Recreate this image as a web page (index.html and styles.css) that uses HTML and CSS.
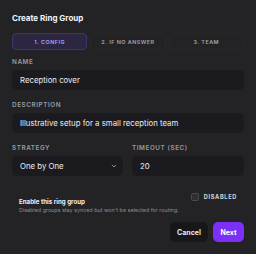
FILE: index.html
```html
<!DOCTYPE html>
<html>
<head>
<meta charset="utf-8">
<link rel="stylesheet" href="styles.css">
</head>
<body>
<div class="modal">
  <h1 class="title">Create Ring Group</h1>
  <div class="tabs">
    <div class="tab active">1. CONFIG</div>
    <div class="tab">2. IF NO ANSWER</div>
    <div class="tab">3. TEAM</div>
  </div>
  <div class="field first">
    <div class="label">NAME</div>
    <div class="input">Reception cover</div>
  </div>
  <div class="field">
    <div class="label">DESCRIPTION</div>
    <div class="input">Illustrative setup for a small reception team</div>
  </div>
  <div class="row">
    <div class="field">
      <div class="label">STRATEGY</div>
      <div class="input select">One by One
        <svg class="chev" width="6" height="4" viewBox="0 0 6 4"><path d="M0.8 0.8 L3 3 L5.2 0.8" fill="none" stroke="#8a8a93" stroke-width="1"/></svg>
      </div>
    </div>
    <div class="field">
      <div class="label">TIMEOUT (SEC)</div>
      <div class="input">20</div>
    </div>
  </div>
  <div class="enable">
    <div class="etext">
      <div class="etitle">Enable this ring group</div>
      <div class="esub">Disabled groups stay synced but won't be selected for routing.</div>
    </div>
    <div class="toggle"><span class="box"></span><span class="tlabel">DISABLED</span></div>
  </div>
  <div class="actions">
    <button class="btn cancel">Cancel</button>
    <button class="btn next">Next</button>
  </div>
</div>
</body>
</html>
```
FILE: styles.css
```css
* { box-sizing: border-box; }
html, body { margin: 0; padding: 0; background: #1b1b1e; }
body { font-family: Inter, "Noto Sans", sans-serif; color: #e8e8ec; }
.modal {
  width: 256px;
  height: 254px;
  background: #232326;
  padding: 12px 12px 12px 12px;
  overflow: hidden;
}
.title { margin: 0; font-size: 8px; font-weight: 700; line-height: 12px; color: #f4f4f6; }
.tabs { display: grid; grid-template-columns: 1fr 1fr 1fr; gap: 3px; margin-top: 9px; }
.tab {
  height: 17px; border: 1px solid #28282c; border-radius: 4px;
  font-size: 5.4px; letter-spacing: 0.5px; font-weight: 600; color: #a4a4ad;
  display: flex; align-items: center; justify-content: center;
}
.tab.active { background: #2c2642; border-color: #3f3568; color: #b6a6ee; }
.field { margin-top: 11px; }
.field.first { margin-top: 8px; }
.row .field { margin-top: 11px; }
.label { font-size: 6.3px; font-weight: 600; letter-spacing: 0.6px; color: #9a9aa2; line-height: 8px; }
.input {
  margin-top: 4px; height: 20px; background: #1b1b1f; border-radius: 5px;
  font-size: 7.8px; color: #ececf0; padding: 0 8px; display: flex; align-items: center;
}
.select { justify-content: space-between; padding-right: 6px; }
.row { display: grid; grid-template-columns: 111px 112px; gap: 9px; }
.enable { display: flex; justify-content: space-between; align-items: flex-start; margin-top: 22px; padding-left: 7px; }
.etitle { font-size: 6.2px; font-weight: 700; color: #f2f2f4; line-height: 8px; }
.esub { font-size: 5.4px; color: #8c8c95; line-height: 7px; margin-top: 1px; white-space: nowrap; }
.toggle { display: flex; align-items: center; gap: 5px; margin-top: -5px; margin-right: 7px; }
.box { width: 8px; height: 8px; border: 1px solid #4a4a50; border-radius: 1.5px; background: #2f2f33; }
.tlabel { font-size: 5.6px; font-weight: 700; letter-spacing: 0.7px; color: #d6d6dc; }
.actions { display: flex; justify-content: flex-end; gap: 5px; margin-top: 8px; }
.btn {
  height: 20px; border: none; border-radius: 5px; font-family: inherit;
  font-size: 7px; font-weight: 700; color: #fff; padding: 0; margin: 0;
}
.cancel { width: 38px; background: #17171a; color: #e8e8ec; }
.next { width: 31px; background: #7b2ff7; }
```
